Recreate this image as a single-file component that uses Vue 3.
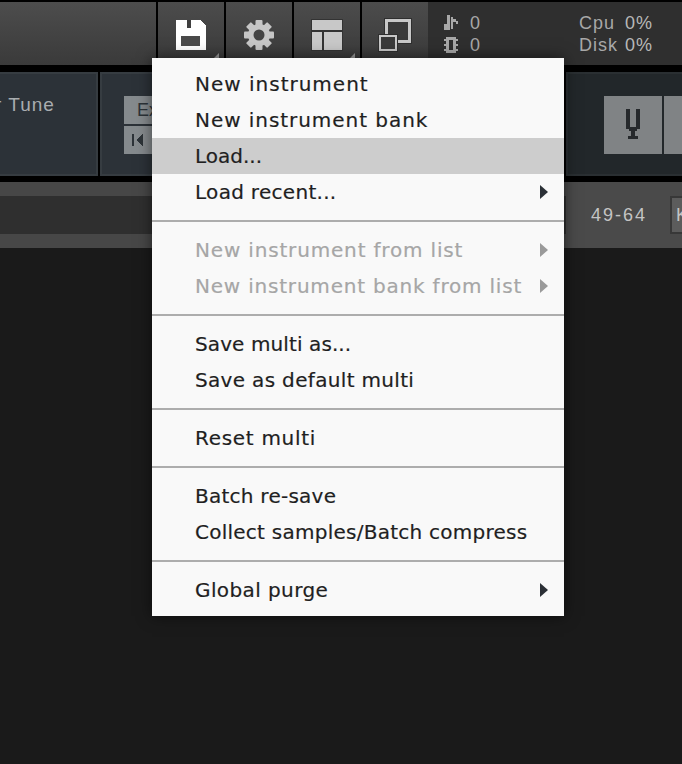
<template>
  <div class="app">
    <div class="topbar">
      <div class="top-spacer"></div>
      <button class="tool-btn">
        <svg width="32" height="32" viewBox="0 0 32 32" shape-rendering="crispEdges">
          <path d="M1 1H25L31 7V31H1Z" fill="#fff" />
          <rect x="12" y="1" width="4" height="8" fill="#3f3f3f" />
          <rect x="6" y="17" width="19" height="10" fill="#4a4a4a" />
        </svg>
        <span class="corner"></span>
      </button>
      <button class="tool-btn">
        <svg width="32" height="32" viewBox="0 0 32 32">
          <g fill="#c6c6c6">
            <rect v-for="a in gearTeeth" :key="a" x="12.5" y="1" width="7" height="30" rx="1" :transform="`rotate(${a} 16 16)`" />
            <circle cx="16" cy="16" r="11" />
          </g>
          <circle cx="16" cy="16" r="5.5" fill="#434343" />
        </svg>
      </button>
      <button class="tool-btn">
        <svg width="32" height="32" viewBox="0 0 32 32" shape-rendering="crispEdges">
          <rect x="0" y="0" width="32" height="32" fill="#333" />
          <rect x="1" y="1" width="30" height="10" fill="#c8c8c8" />
          <rect x="1" y="13" width="10" height="18" fill="#c8c8c8" />
          <rect x="13" y="13" width="18" height="18" fill="#c8c8c8" />
        </svg>
        <span class="corner"></span>
      </button>
      <button class="tool-btn">
        <svg width="34" height="34" viewBox="0 0 34 34" shape-rendering="crispEdges">
          <rect x="6" y="0" width="28" height="26" fill="#2f2f2f" />
          <rect x="7" y="1" width="26" height="24" fill="#c8c8c8" />
          <rect x="10" y="4" width="20" height="18" fill="#3a3a3a" />
          <rect x="0" y="16" width="20" height="18" fill="#2f2f2f" />
          <rect x="1" y="17" width="18" height="16" fill="#c8c8c8" />
          <rect x="3" y="19" width="14" height="12" fill="#3a3a3a" />
        </svg>
      </button>
      <div class="status">
        <div class="status-voices">
          <svg width="16" height="16" viewBox="0 0 16 16" shape-rendering="crispEdges" fill="#a8a8a8">
            <path d="M4 0H7V15H1V9H4ZM8 2H10V4H13V6H15V9H13V7H10V14H8Z" />
          </svg>
          <span class="status-num">0</span>
          <svg width="16" height="16" viewBox="0 0 16 16" shape-rendering="crispEdges" fill="#a8a8a8">
            <path d="M3 0H13V16H3ZM6 3V13H10V3ZM1 2H3V4H1ZM13 2H15V4H13ZM1 7H3V9H1ZM13 7H15V9H13ZM1 12H3V14H1ZM13 12H15V14H13Z" />
          </svg>
          <span class="status-num">0</span>
        </div>
        <div class="status-load">
          <span>Cpu</span><span class="pct">0%</span>
          <span>Disk</span><span class="pct">0%</span>
        </div>
      </div>
    </div>

    <div class="panels">
      <div class="panel tune-panel"><span class="tune-label">r Tune</span></div>
      <div class="panel middle-panel">
        <div class="small-btns">
          <div class="small-btn ex-btn">Ex</div>
          <div class="small-btn">
            <svg width="14" height="14" viewBox="0 0 14 14" shape-rendering="crispEdges" fill="#2d3338">
              <path d="M1 1H3V13H1ZM12 1V13L5 7Z" />
            </svg>
          </div>
        </div>
      </div>
      <div class="panel right-panel">
        <div class="tuner-btn">
          <svg width="16" height="32" viewBox="0 0 16 32" shape-rendering="crispEdges" fill="#26292c">
            <path d="M1 0H5V18H11V0H15V20H12V22H10V27H13V30H3V27H6V22H4V20H1Z" />
          </svg>
        </div>
        <div class="tuner-btn"></div>
      </div>
    </div>

    <div class="pagebar">
      <div class="pagebar-left">
        <div class="strip"></div>
        <div class="strip-dark"></div>
        <div class="strip"></div>
      </div>
      <div class="pagebar-right">
        <span class="page-range">49-64</span>
        <span class="key-box">K</span>
      </div>
    </div>

    <div class="menu">
      <div v-for="(group, i) in menuGroups" :key="i" class="menu-group">
        <div
          v-for="item in group"
          :key="item.label"
          class="menu-item"
          :class="{ active: item.active, disabled: item.disabled }"
        >
          <span :style="{ letterSpacing: item.track + 'px' }">{{ item.label }}</span>
          <span v-if="item.sub" class="arrow"></span>
        </div>
      </div>
    </div>
  </div>
</template>

<script setup>
const gearTeeth = [0, 45, 90, 135]

// track = letter spacing per label, the original bitmap font has wider n/m/t/u
const menuGroups = [
  [
    { label: 'New instrument', track: 1 },
    { label: 'New instrument bank', track: 0.95 },
    { label: 'Load...', track: 0, active: true },
    { label: 'Load recent...', track: 0.3, sub: true }
  ],
  [
    { label: 'New instrument from list', track: 0.83, sub: true, disabled: true },
    { label: 'New instrument bank from list', track: 0.8, sub: true, disabled: true }
  ],
  [
    { label: 'Save multi as...', track: 0.1 },
    { label: 'Save as default multi', track: 0.33 }
  ],
  [{ label: 'Reset multi', track: 0.7 }],
  [
    { label: 'Batch re-save', track: 0.25 },
    { label: 'Collect samples/Batch compress', track: 0.25 }
  ],
  [{ label: 'Global purge', track: 0.4, sub: true }]
]
</script>

<style>
html,
body {
  margin: 0;
  background: #1a1a1a;
}
</style>

<style scoped>
.app {
  position: relative;
  width: 682px;
  height: 764px;
  overflow: hidden;
  background: #1a1a1a;
  font-family: "DejaVu Sans", sans-serif;
}

.topbar {
  display: flex;
  height: 63px;
  padding-top: 2px;
  background: #000;
  gap: 2px;
}

.top-spacer {
  width: 156px;
  background: linear-gradient(#4d4d4d, #3a3a3a);
}

.tool-btn {
  position: relative;
  display: flex;
  align-items: center;
  justify-content: center;
  width: 66px;
  padding: 3px 0 0;
  border: none;
  background: linear-gradient(#4c4c4c, #393939);
}

.corner {
  position: absolute;
  right: 5px;
  bottom: 5px;
  width: 7px;
  height: 7px;
  background: #9a9a9a;
  clip-path: polygon(100% 0, 100% 100%, 0 100%);
}

.status {
  flex: 1;
  display: flex;
  margin-left: -2px;
  padding: 10px 29px 0 15px;
  background: #2f2f2f;
  color: #a8a8a8;
  font-family: "Liberation Sans", sans-serif;
  font-size: 18px;
  line-height: 22px;
  letter-spacing: 1px;
}

.status-voices {
  display: grid;
  grid-template-columns: 16px auto;
  column-gap: 11px;
  align-items: center;
  align-content: start;
}

.status-load {
  display: grid;
  grid-template-columns: 46px auto;
  margin-left: auto;
  align-content: start;
}

.pct {
  color: #b8b8b8;
}

.panels {
  display: flex;
  gap: 2px;
  height: 104px;
  margin-top: 7px;
  background: #000;
  box-shadow: 0 -7px 0 #000, 0 6px 0 #000;
}

.panel {
  box-sizing: border-box;
  flex-shrink: 0;
  border: 2px solid #363c41;
  background: #2c3238;
}

.tune-panel {
  width: 98px;
  padding: 19px 0 0;
  border-left: none;
  color: #a9adb0;
  font-family: "Liberation Sans", sans-serif;
  font-size: 19px;
  line-height: 24px;
  letter-spacing: 1px;
}

.tune-label {
  display: block;
  margin-left: -5px;
}

.middle-panel {
  width: 464px;
  padding: 22px 0 0 22px;
}

.small-btns {
  display: flex;
  flex-direction: column;
  gap: 2px;
  width: 48px;
}

.small-btn {
  display: flex;
  align-items: center;
  height: 28px;
  padding-left: 7px;
  background: #858a8d;
  color: #2d3338;
  font-family: "Liberation Sans", sans-serif;
  font-size: 18px;
}

.ex-btn {
  padding-left: 13px;
}

.right-panel {
  flex: 1 1 0;
  min-width: 0;
  display: flex;
  gap: 2px;
  padding: 22px 0 0 36px;
  border-color: #2a2f32;
  border-right: none;
  background: #22272a;
}

.tuner-btn {
  display: flex;
  align-items: center;
  justify-content: center;
  flex-shrink: 0;
  width: 58px;
  height: 58px;
  background: #808385;
}

.pagebar {
  display: flex;
  height: 66px;
  margin-top: 6px;
}

.pagebar-left {
  flex-shrink: 0;
  display: flex;
  flex-direction: column;
  width: 566px;
}

.strip {
  height: 14px;
  background: #474747;
}

.strip-dark {
  height: 38px;
  background: #2f2f2f;
}

.pagebar-right {
  flex: 1 1 0;
  min-width: 0;
  display: flex;
  align-items: center;
  padding-left: 25px;
  background: #4a4a4a;
  color: #c4c4c4;
  font-family: "Liberation Sans", sans-serif;
  font-size: 18px;
  letter-spacing: 2px;
}

.page-range {
  width: 79px;
  flex-shrink: 0;
}

.key-box {
  box-sizing: border-box;
  flex-shrink: 0;
  width: 24px;
  height: 38px;
  padding: 7px 0 0 4px;
  border: 2px solid #383838;
  background: #5c5c5c;
}

.menu {
  position: absolute;
  left: 152px;
  top: 58px;
  width: 412px;
  height: 558px;
  padding-top: 8px;
  box-sizing: border-box;
  background: #f9f9f9;
  box-shadow: 0 0 14px rgba(0, 0, 0, 0.55);
  color: #1f1f1f;
  font-size: 20px;
  -webkit-text-stroke: 0.2px currentColor;
}

.menu-group + .menu-group {
  margin-top: 10px;
  padding-top: 10px;
  border-top: 2px solid #adadad;
}

.menu-item {
  position: relative;
  height: 36px;
  padding-left: 43px;
  line-height: 36px;
}

.menu-item.active {
  background: #cdcdcd;
}

.menu-item.disabled {
  color: #a6a6a6;
}

.arrow {
  position: absolute;
  left: 388px;
  top: 11px;
  width: 8px;
  height: 14px;
  background: #2b3036;
  clip-path: polygon(0 0, 100% 50%, 0 100%);
}

.menu-item.disabled .arrow {
  background: #9a9a9a;
}
</style>
